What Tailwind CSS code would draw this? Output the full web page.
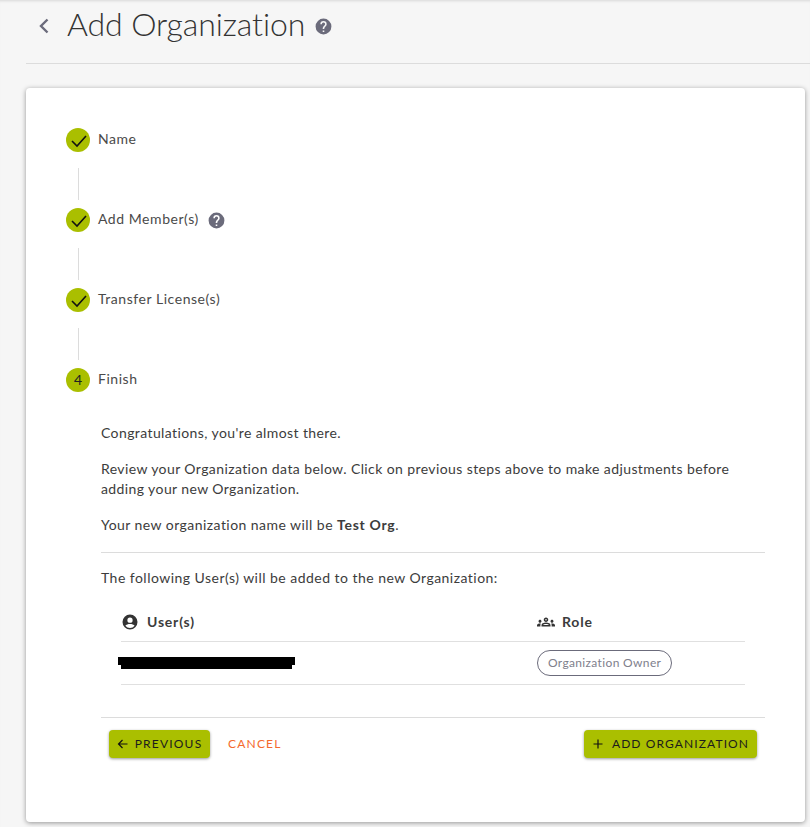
<!DOCTYPE html>
<html lang="en">
<head>
  <meta charset="UTF-8" />
  <title>Add Organization</title>
  <script src="https://cdn.jsdelivr.net/npm/@tailwindcss/browser@4"></script>
</head>
<body class="bg-[#f6f6f6] h-[827px] w-[810px] overflow-hidden shadow-[inset_0_3px_3px_-2px_rgba(0,0,0,0.12)] font-['Lato','Noto_Sans',sans-serif] text-[14px] leading-[20px] tracking-[0.4px] text-[#3c3c3c]">

  <!-- header -->
  <div class="ml-[26px] h-[63px] border-b border-[#dcdcdc] flex items-start box-content">
    <svg class="ml-[12px] mt-[17px] w-[12px] h-[18px] text-[#6b6b7b]" viewBox="0 0 12 18" fill="none" stroke="currentColor" stroke-width="2.4"><path d="M9.5 2.5 3 9l6.5 6.5" /></svg>
    <h1 class="ml-[17px] mt-[2px] text-[32px] leading-[44px] tracking-[-0.1px] font-light text-[#333]">Add Organization</h1>
    <svg class="ml-[9px] mt-[17px] w-[19px] h-[19px] text-[#6b6b7b]" viewBox="0 0 24 24" fill="currentColor"><path d="M12 2a10 10 0 1 0 0 20 10 10 0 0 0 0-20Zm1 17h-2v-2h2v2Zm2.07-7.75-.9.92C13.45 12.9 13 13.5 13 15h-2v-.5c0-1.1.45-2.1 1.17-2.83l1.24-1.26c.37-.36.59-.86.59-1.41 0-1.1-.9-2-2-2s-2 .9-2 2H8a4 4 0 0 1 8 0c0 .88-.36 1.68-.93 2.25Z" /></svg>
  </div>

  <!-- card -->
  <div class="ml-[26px] mt-[24px] w-[779px] h-[734px] bg-white rounded-[4px] shadow-[0_1px_5px_rgba(0,0,0,0.4)] pt-[40px] pl-[40px] pr-[40px]">
    <div class="flex items-center h-[24px]">
      <span class="w-[24px] h-[24px] rounded-full bg-[#aabf00] flex items-center justify-center">
        <svg class="w-[18px] h-[18px]" viewBox="0 0 18 18" fill="none" stroke="#111" stroke-width="1.6"><path d="M3 10 8 15 17 5" /></svg>
      </span>
      <span class="ml-[8px] pb-[2px] tracking-[0.55px] text-[#4a4a4a]">Name</span>
    </div>
    <div class="ml-[12px] mt-[16px] mb-[8px] h-[32px] w-px bg-[#dcdcdc]"></div>
    <div class="flex items-center h-[24px]">
      <span class="w-[24px] h-[24px] rounded-full bg-[#aabf00] flex items-center justify-center">
        <svg class="w-[18px] h-[18px]" viewBox="0 0 18 18" fill="none" stroke="#111" stroke-width="1.6"><path d="M3 10 8 15 17 5" /></svg>
      </span>
      <span class="ml-[8px] pb-[2px] tracking-[0.55px] text-[#4a4a4a]">Add Member(s)</span>
      <svg class="ml-[8px] w-[19px] h-[19px] text-[#6b6b7b]" viewBox="0 0 24 24" fill="currentColor"><path d="M12 2a10 10 0 1 0 0 20 10 10 0 0 0 0-20Zm1 17h-2v-2h2v2Zm2.07-7.75-.9.92C13.45 12.9 13 13.5 13 15h-2v-.5c0-1.1.45-2.1 1.17-2.83l1.24-1.26c.37-.36.59-.86.59-1.41 0-1.1-.9-2-2-2s-2 .9-2 2H8a4 4 0 0 1 8 0c0 .88-.36 1.68-.93 2.25Z" /></svg>
    </div>
    <div class="ml-[12px] mt-[16px] mb-[8px] h-[32px] w-px bg-[#dcdcdc]"></div>
    <div class="flex items-center h-[24px]">
      <span class="w-[24px] h-[24px] rounded-full bg-[#aabf00] flex items-center justify-center">
        <svg class="w-[18px] h-[18px]" viewBox="0 0 18 18" fill="none" stroke="#111" stroke-width="1.6"><path d="M3 10 8 15 17 5" /></svg>
      </span>
      <span class="ml-[8px] pb-[2px] tracking-[0.55px] text-[#4a4a4a]">Transfer License(s)</span>
    </div>
    <div class="ml-[12px] mt-[16px] mb-[8px] h-[32px] w-px bg-[#dcdcdc]"></div>
    <div class="flex items-center h-[24px]">
      <span class="w-[24px] h-[24px] rounded-full bg-[#aabf00] flex items-center justify-center text-[#222] tracking-normal">4</span>
      <span class="ml-[8px] pb-[2px] tracking-[0.55px] text-[#4a4a4a]">Finish</span>
    </div>

    <!-- step content -->
    <div class="ml-[35px] w-[664px] mt-[31px]">
      <p>Congratulations, you're almost there.</p>
      <p class="mt-[16px]">Review your Organization data below. Click on previous steps above to make adjustments before adding your new Organization.</p>
      <p class="mt-[16px] tracking-[0.45px]">Your new organization name will be <b class="font-bold tracking-[0.7px]">Test Org</b>.</p>
      <div class="mt-[17px] h-px bg-[#dcdcdc]"></div>
      <p class="mt-[15px] tracking-[0.47px]">The following User(s) will be added to the new Organization:</p>

      <div class="mx-[20px] mt-[15px]">
        <div class="flex h-[38px] items-center border-b border-[#e0e0e0] box-content font-bold tracking-[0.8px] text-[#3c3c3c]">
          <div class="w-[416px] flex items-center">
            <svg class="w-[18px] h-[18px] text-[#333]" viewBox="0 0 24 24" fill="currentColor"><path d="M12 2a10 10 0 1 0 0 20 10 10 0 0 0 0-20Zm0 4a3.5 3.5 0 1 1 0 7 3.5 3.5 0 0 1 0-7Zm0 14a8 8 0 0 1-6.16-2.9C6.6 15.5 9.6 14.8 12 14.8s5.4.7 6.16 2.3A8 8 0 0 1 12 20Z" /></svg>
            <span class="ml-[8px]">User(s)</span>
          </div>
          <div class="flex items-center">
            <svg class="w-[18px] h-[18px] text-[#333]" viewBox="0 0 24 24" fill="currentColor"><path d="M4 13c1.1 0 2-.9 2-2s-.9-2-2-2-2 .9-2 2 .9 2 2 2zm1.13 1.1C4.76 14.04 4.39 14 4 14c-.99 0-1.93.21-2.78.58C.48 14.9 0 15.62 0 16.43V18h4.5v-1.61c0-.83.23-1.61.63-2.29zM20 13c1.1 0 2-.9 2-2s-.9-2-2-2-2 .9-2 2 .9 2 2 2zm4 3.43c0-.81-.48-1.53-1.22-1.85C21.93 14.21 20.99 14 20 14c-.39 0-.76.04-1.13.1.4.68.63 1.46.63 2.29V18H24v-1.57zm-7.76-2.78c-1.17-.52-2.61-.9-4.24-.9s-3.07.39-4.24.9C6.68 14.13 6 15.21 6 16.39V18h12v-1.61c0-1.18-.68-2.26-1.76-2.74zM8.07 16c.09-.23.13-.39.91-.69.97-.38 1.99-.56 3.02-.56s2.05.18 3.02.56c.77.3.81.46.91.69H8.07zM12 8c.55 0 1 .45 1 1s-.45 1-1 1-1-.45-1-1 .45-1 1-1m0-2c-1.66 0-3 1.34-3 3s1.34 3 3 3 3-1.34 3-3-1.34-3-3-3z" /></svg>
            <span class="ml-[7px]">Role</span>
          </div>
        </div>
        <div class="flex h-[42px] items-center border-b border-[#e0e0e0] box-content">
          <div class="w-[416px] relative">
            <div class="absolute left-[-3px] top-[-6px] w-[177px] h-[8px] bg-black"></div>
            <div class="absolute left-[0px] top-[2px] w-[171px] h-[4px] bg-black"></div>
          </div>
          <span class="h-[26px] px-[10px] rounded-full border border-[#6b6b7b] text-[12px] leading-[23px] text-[#80808c] tracking-[0.35px]">Organization Owner</span>
        </div>
      </div>

      <div class="mt-[32px] h-px bg-[#dcdcdc]"></div>
      <div class="mt-[12px] flex items-center px-[8px]">
        <button class="h-[28px] w-[101px] rounded-[4px] bg-[#aabf00] shadow-[0_1px_3px_rgba(0,0,0,0.4)] flex items-center justify-center text-[12px] tracking-[1.2px] text-[#1c1c1c]">
          <svg class="w-[12px] h-[12px] mr-[6px]" viewBox="0 0 12 12" fill="none" stroke="#111" stroke-width="1.2"><path d="M10.5 6H1.8M5.5 2 1.5 6l4 4" /></svg>
          PREVIOUS
        </button>
        <span class="ml-[18px] text-[12px] tracking-[1.2px] text-[#f4692e]">CANCEL</span>
        <button class="ml-auto h-[28px] w-[173px] rounded-[4px] bg-[#aabf00] shadow-[0_1px_3px_rgba(0,0,0,0.4)] flex items-center justify-center text-[12px] tracking-[1.1px] text-[#1c1c1c]">
          <svg class="w-[12px] h-[12px] mr-[8px]" viewBox="0 0 12 12" fill="none" stroke="#111" stroke-width="1.2"><path d="M6 1.5v9M1.5 6h9" /></svg>
          ADD ORGANIZATION
        </button>
      </div>
    </div>
  </div>
</body>
</html>
